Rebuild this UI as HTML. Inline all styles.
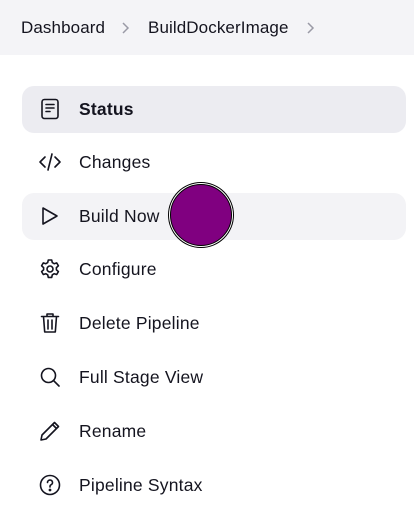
<!DOCTYPE html>
<html><head><style>
body{margin:0;width:414px;height:519px;background:#fff;font-family:"Liberation Sans",sans-serif;color:#14141f;position:relative;overflow:hidden}
.hdr{position:absolute;left:0;top:0;width:414px;height:55px;background:#f4f4f7}
.bc{position:absolute;top:18px;font-size:17px;color:#14141f;letter-spacing:0.1px}
.chev{position:absolute;top:20px}
.item{position:absolute;left:22px;width:384px;height:47px;border-radius:12px}
.lbl{position:absolute;left:79px;font-size:17.5px;line-height:20px;letter-spacing:0.2px}
.ic{position:absolute;left:38px;width:24px;height:24px}
svg.ic{fill:none;stroke:#14141f;stroke-width:1.6;stroke-linecap:round;stroke-linejoin:round}
</style></head><body>
<div class="hdr"></div>
<div class="bc" style="left:21px">Dashboard</div>
<svg class="chev" style="left:121px" width="10" height="16"><path d="M2 3l5 5-5 5" stroke="#9a9aa6" stroke-width="1.5" fill="none"/></svg>
<div class="bc" style="left:148px">BuildDockerImage</div>
<svg class="chev" style="left:306px" width="10" height="16"><path d="M2 3l5 5-5 5" stroke="#9a9aa6" stroke-width="1.5" fill="none"/></svg>

<div class="item" style="top:86px;background:#ececf1"></div>
<div class="item" style="top:193px;background:#f3f3f6"></div>

<svg class="ic" style="top:97px" viewBox="0 0 24 24"><rect x="4" y="2.5" width="16" height="19" rx="2.5"/><path d="M8 7.5h8M8 11h8M8 14.5h4"/></svg>
<div class="lbl" style="top:99px;font-weight:bold">Status</div>

<svg class="ic" style="top:150px" viewBox="0 0 24 24"><path d="M7 7l-5 5 5 5M17 7l5 5-5 5M14 4l-4 16"/></svg>
<div class="lbl" style="top:152px">Changes</div>

<svg class="ic" style="top:204px" viewBox="0 0 24 24"><path d="M5 4l14 8-14 8z"/></svg>
<div class="lbl" style="top:206px">Build Now</div>

<svg class="ic" style="top:257px" viewBox="0 0 24 24"><circle cx="12" cy="12" r="3"/><path d="M10.3 3h3.4l.6 2.6 1.9 1.1 2.5-.8 1.7 2.9-2 1.8v2.2l2 1.8-1.7 2.9-2.5-.8-1.9 1.1-.6 2.6h-3.4l-.6-2.6-1.9-1.1-2.5.8-1.7-2.9 2-1.8v-2.2l-2-1.8 1.7-2.9 2.5.8 1.9-1.1z"/></svg>
<div class="lbl" style="top:259px">Configure</div>

<svg class="ic" style="top:311px" viewBox="0 0 24 24"><path d="M3.5 5.5h17M9 5.5V3h6v2.5M5.5 5.5l1.2 15.5h10.6l1.2-15.5M10 9v9M14 9v9"/></svg>
<div class="lbl" style="top:313px">Delete Pipeline</div>

<svg class="ic" style="top:365px" viewBox="0 0 24 24"><circle cx="10.5" cy="10.5" r="7"/><path d="M15.5 15.5l5.5 5.5"/></svg>
<div class="lbl" style="top:367px">Full Stage View</div>

<svg class="ic" style="top:419px" viewBox="0 0 24 24"><path d="M16.5 3.5l4 4L8 20l-5 1 1-5z M14.5 5.5l4 4"/></svg>
<div class="lbl" style="top:421px">Rename</div>

<svg class="ic" style="top:473px" viewBox="0 0 24 24"><circle cx="12" cy="12" r="9.5"/><path d="M9.5 9.5a2.5 2.5 0 1 1 3.5 2.3c-.7.3-1 .9-1 1.7v.5"/><circle cx="12" cy="17" r=".6" fill="#14141f"/></svg>
<div class="lbl" style="top:475px">Pipeline Syntax</div>

<div style="position:absolute;left:170px;top:184px;width:60px;height:60px;border-radius:50%;background:#800080;border:1px solid #000;box-shadow:0 0 0 1px #fff,0 0 0 2px #000"></div>
</body></html>
